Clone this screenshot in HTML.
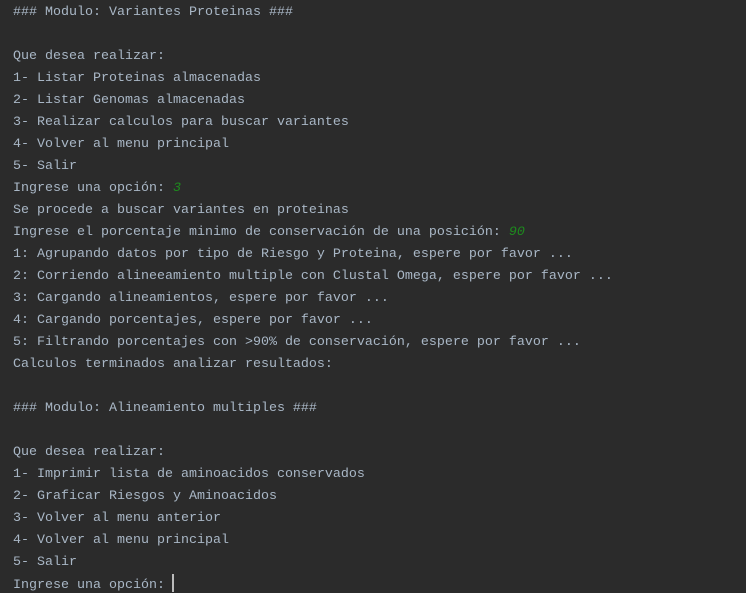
<!DOCTYPE html>
<html><head><meta charset="utf-8"><style>
html,body{margin:0;padding:0;background:#2b2b2b;width:746px;height:593px;overflow:hidden}
pre{margin:0;padding:2px 0 0 13px;font-family:"Liberation Mono","DejaVu Sans Mono",monospace;font-size:13.33px;line-height:22px;color:#a9b7c6;white-space:pre}
.g{color:#1e8a1e;font-style:italic}
.c{display:inline-block;width:2px;height:18px;background:#bbbbbb;vertical-align:-4px;margin-left:-1px}
</style></head><body><pre>### Modulo: Variantes Proteinas ###

Que desea realizar:
1- Listar Proteinas almacenadas
2- Listar Genomas almacenadas
3- Realizar calculos para buscar variantes
4- Volver al menu principal
5- Salir
Ingrese una opción: <span class="g">3</span>
Se procede a buscar variantes en proteinas
Ingrese el porcentaje minimo de conservación de una posición: <span class="g">90</span>
1: Agrupando datos por tipo de Riesgo y Proteina, espere por favor ...
2: Corriendo alineeamiento multiple con Clustal Omega, espere por favor ...
3: Cargando alineamientos, espere por favor ...
4: Cargando porcentajes, espere por favor ...
5: Filtrando porcentajes con &gt;90% de conservación, espere por favor ...
Calculos terminados analizar resultados:

### Modulo: Alineamiento multiples ###

Que desea realizar:
1- Imprimir lista de aminoacidos conservados
2- Graficar Riesgos y Aminoacidos
3- Volver al menu anterior
4- Volver al menu principal
5- Salir
Ingrese una opción: <span class="c"></span></pre></body></html>
